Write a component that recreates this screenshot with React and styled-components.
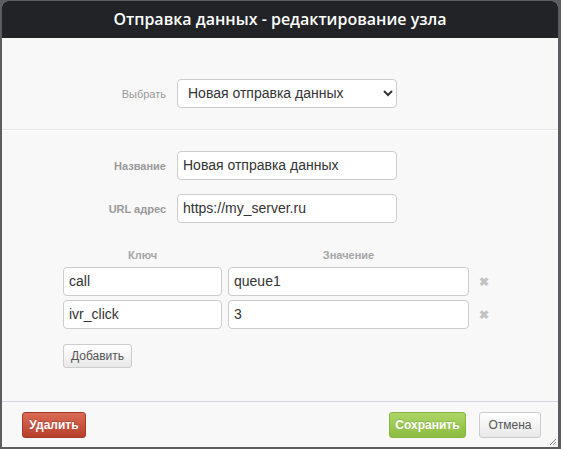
import React from "react";
import styled, { createGlobalStyle } from "styled-components";

const Global = createGlobalStyle`
  html, body { margin: 0; padding: 0; background: #5b5d61; }
  body { width: 561px; height: 449px; overflow: hidden; font-family: "Liberation Sans", Arial, sans-serif; }
  * { box-sizing: border-box; }
`;

const Dialog = styled.div`
  position: relative;
  margin: 1px 0 0 2px;
  width: 556px;
  height: 446px;
  background: #f8f8f8;
  border-radius: 6px 6px 0 0;
  overflow: hidden;
  display: flex;
  flex-direction: column;
`;

const TitleBar = styled.div`
  height: 37px;
  background: #222327;
  color: #fff;
  display: flex;
  align-items: center;
  justify-content: center;
  font-family: "Open Sans", "Noto Sans", sans-serif;
  font-weight: 600;
  font-size: 16px;
  padding-bottom: 1px;
`;

const Section = styled.div`
  padding: ${(p) => p.$pad};
  border-bottom: ${(p) => (p.$sep ? "1px solid #e6e6e6" : "none")};
  box-shadow: ${(p) => (p.$sep ? "0 1px 0 #fff" : "none")};
`;

const FormGrid = styled.div`
  display: grid;
  grid-template-columns: 164px 220px;
  column-gap: 11px;
  row-gap: 14px;
  align-items: center;
`;

const Label = styled.label`
  text-align: right;
  font-size: 11px;
  font-weight: ${(p) => (p.$bold ? 700 : 400)};
  color: #999;
`;

const Input = styled.input`
  height: 29px;
  width: 100%;
  border: 1px solid #cccccc;
  border-radius: 4px;
  background: #fff;
  padding: 0 5px 1px;
  font-family: "Liberation Sans", Arial, sans-serif;
  font-size: 14px;
  color: #333;
  outline: none;
`;

const Select = styled.select`
  height: 29px;
  width: 100%;
  border: 1px solid #cccccc;
  border-radius: 4px;
  background: #fff;
  padding: 0 4px 1px 6px;
  font-family: "Liberation Sans", Arial, sans-serif;
  font-size: 14px;
  color: #333;
  outline: none;
`;

const KVWrap = styled.div`
  margin-top: 26px;
  padding-left: 61px;
`;

const KVGrid = styled.div`
  display: grid;
  grid-template-columns: 159px 241px 30px;
  column-gap: 6px;
  row-gap: 4px;
  align-items: center;
`;

const ColHead = styled.div`
  text-align: center;
  font-size: 11px;
  font-weight: 700;
  color: #a5a5a5;
  margin-bottom: 2px;
`;

const Remove = styled.span`
  color: #c2c2c2;
  font-size: 12px;
  font-weight: 700;
  padding-left: 4px;
  line-height: 1;
`;

const Button = styled.button`
  height: ${(p) => p.$h || 26}px;
  width: ${(p) => p.$w}px;
  padding: 0;
  border-radius: 3px;
  font-family: "Liberation Sans", Arial, sans-serif;
  font-size: 12px;
  cursor: pointer;
  ${(p) =>
    p.$variant === "danger"
      ? `background: linear-gradient(#db6b55, #b73f2c); border: 1px solid #a63a29; color: #fff; font-weight: 700; text-shadow: 0 -1px 0 rgba(0,0,0,0.2);`
      : p.$variant === "success"
      ? `background: linear-gradient(#acd666, #8cbb40); border: 1px solid #88b53f; color: #fff; font-weight: 700; text-shadow: 0 -1px 0 rgba(0,0,0,0.15);`
      : `background: linear-gradient(#ffffff, #e8e8e8); border: 1px solid #cccccc; color: #555; font-weight: 400;`}
`;

const AddRow = styled.div`
  margin-top: 15px;
`;

const Footer = styled.div`
  margin-top: auto;
  height: 46px;
  border-top: 1px solid #d6d6de;
  display: flex;
  align-items: flex-start;
  padding: 10px 17px 0 20px;
  gap: 13px;
`;

const Spacer = styled.div`
  flex: 1;
`;

const Grip = styled.svg`
  position: absolute;
  right: 1px;
  bottom: 1px;
`;

export default function App() {
  const rows = [
    ["call", "queue1"],
    ["ivr_click", "3"],
  ];
  return (
    <>
      <Global />
      <Dialog>
        <TitleBar>Отправка данных - редактирование узла</TitleBar>
        <Section $pad="41px 0 21px" $sep>
          <FormGrid>
            <Label>Выбрать</Label>
            <Select defaultValue="new">
              <option value="new">Новая отправка данных</option>
            </Select>
          </FormGrid>
        </Section>
        <Section $pad="21px 0 0">
          <FormGrid>
            <Label $bold>Название</Label>
            <Input defaultValue="Новая отправка данных" />
            <Label $bold>URL адрес</Label>
            <Input defaultValue="https://my_server.ru" />
          </FormGrid>
          <KVWrap>
            <KVGrid>
              <ColHead>Ключ</ColHead>
              <ColHead>Значение</ColHead>
              <span />
              {rows.map(([k, v]) => (
                <React.Fragment key={k}>
                  <Input defaultValue={k} />
                  <Input defaultValue={v} />
                  <Remove>✖</Remove>
                </React.Fragment>
              ))}
            </KVGrid>
            <AddRow>
              <Button $w={69} $h={24}>Добавить</Button>
            </AddRow>
          </KVWrap>
        </Section>
        <Footer>
          <Button $variant="danger" $w={64}>Удалить</Button>
          <Spacer />
          <Button $variant="success" $w={77}>Сохранить</Button>
          <Button $w={62}>Отмена</Button>
        </Footer>
        <Grip width="8" height="8" viewBox="0 0 8 8">
          <path d="M7 1L1 7M7 4L4 7M7 6.5L6.5 7" stroke="#888" strokeWidth="1" />
        </Grip>
      </Dialog>
    </>
  );
}
